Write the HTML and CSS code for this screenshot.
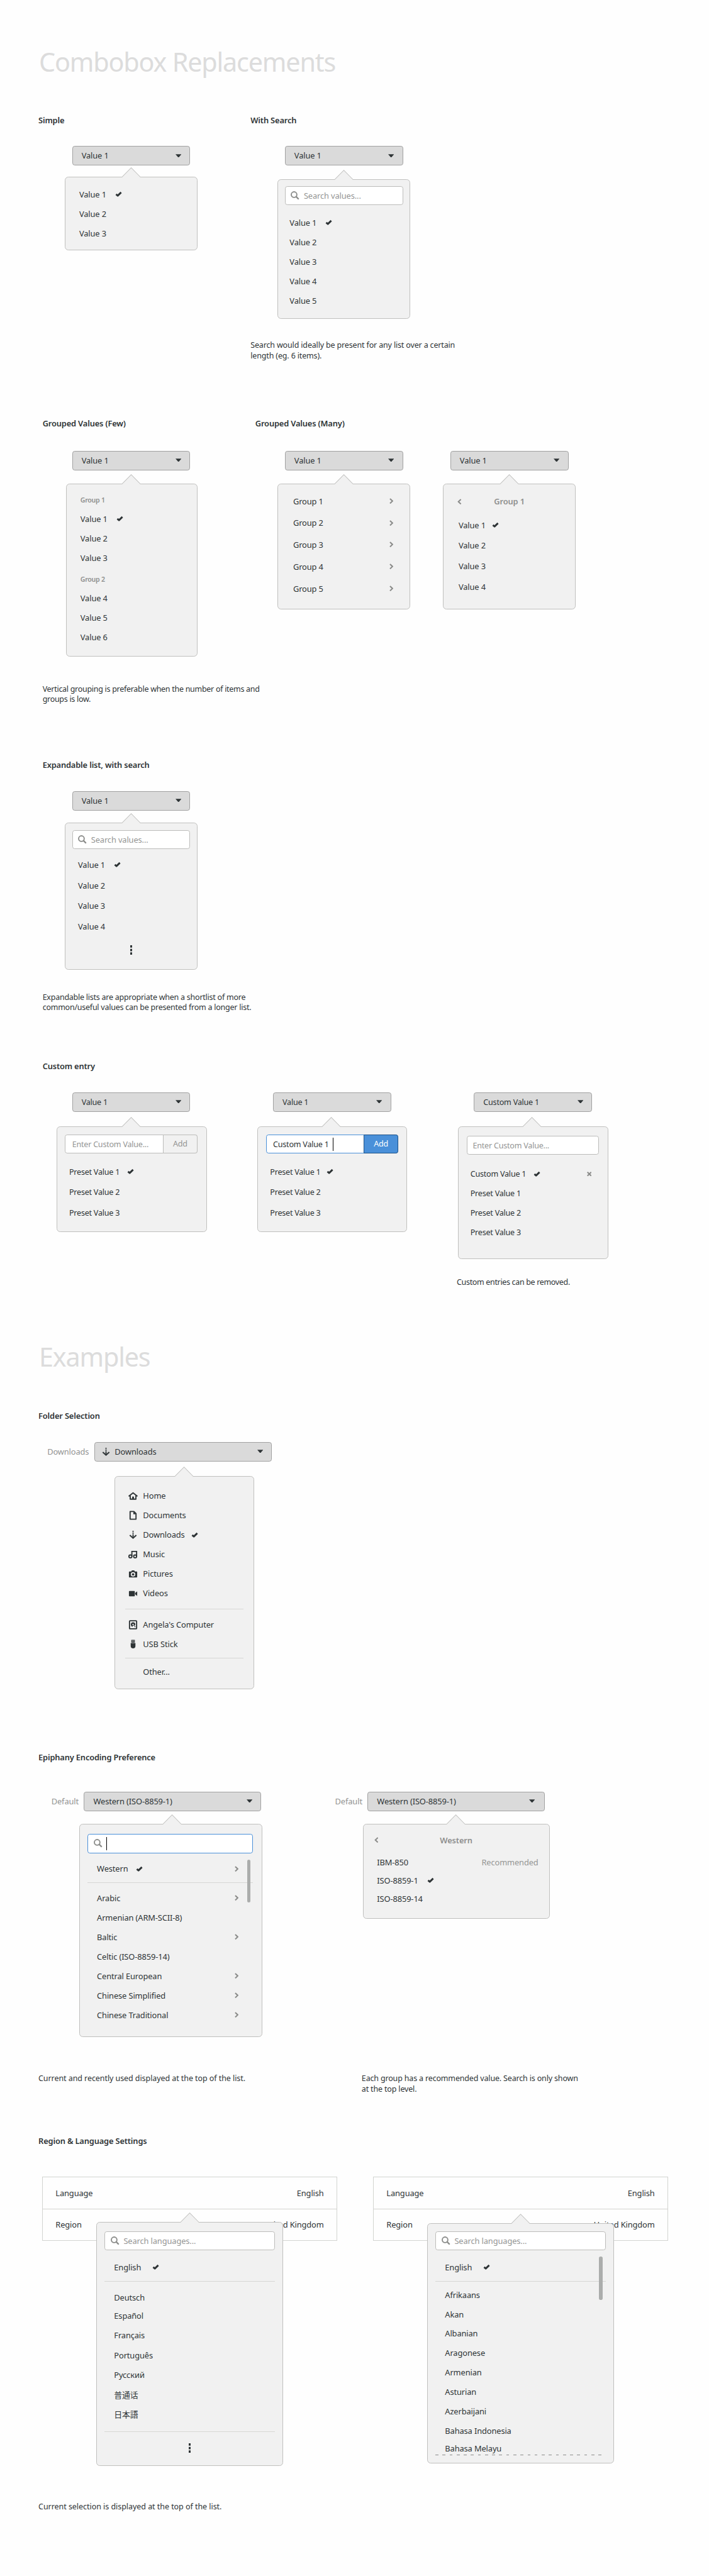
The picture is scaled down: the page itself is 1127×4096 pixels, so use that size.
FILE: index.html
```html
<!DOCTYPE html>
<html lang="en">
<head>
<meta charset="utf-8">
<title>Combobox Replacements</title>
<link rel="stylesheet" href="styles.css">
</head>
<body>
<svg class="defs" aria-hidden="true">
  <symbol id="arrow" viewBox="0 0 31 18"><path d="M0 18V16.5L15.5.8 31 16.5V18z" fill="#f1f1f1"/><path d="M0 16.5L15.5.8 31 16.5" fill="none" stroke="#c2c2c0" stroke-width="1.1"/></symbol>
  <symbol id="caret" viewBox="0 0 10 6"><path d="M0 .3h10L5.7 5.2H4.3z" fill="#2e3436"/></symbol>
  <symbol id="check" viewBox="0 0 12 10"><path d="M1.6 5.2L4.4 7.6 10.200 2" fill="none" stroke="#2e3436" stroke-width="3.100" stroke-linejoin="round"/></symbol>
  <symbol id="next" viewBox="0 0 7 10"><path d="M1 1l4.2 4L1 9" fill="none" stroke="#8b8c8a" stroke-width="2.200"/></symbol>
  <symbol id="back" viewBox="0 0 7 10"><path d="M6 1L1.8 5 6 9" fill="none" stroke="#8b8c8a" stroke-width="2.200"/></symbol>
  <symbol id="close" viewBox="0 0 8 8"><path d="M.8.8l6.4 6.4M7.2.8L.8 7.2" fill="none" stroke="#8b8c8a" stroke-width="2.200"/></symbol>
  <symbol id="search" viewBox="0 0 15 15"><circle cx="5.8" cy="5.8" r="4.7" fill="none" stroke="#8b8c8a" stroke-width="2"/><path d="M9 9l4.6 4.6" stroke="#8b8c8a" stroke-width="2.5"/></symbol>
  <symbol id="dots" viewBox="0 0 4 16"><path d="M0 0h4v4H0zM0 6h4v4H0zM0 12h4v4H0z" fill="#2e3436"/></symbol>
  <symbol id="home" viewBox="0 0 16 16"><path d="M1.200 8.300L8 3l6.800 5.300M3.200 8V13.600H12.800V8" fill="none" stroke="#2e3436" stroke-width="2" stroke-linejoin="round" stroke-linecap="round"/><path d="M6.500 9.200h3V14h-3z" fill="#2e3436"/></symbol>
  <symbol id="document" viewBox="0 0 16 16"><path d="M3 1.500h6.500L13 5V14.500H3z" fill="none" stroke="#2e3436" stroke-width="2" stroke-linejoin="round"/><path d="M8.500 1.500l4.500 4.500H8.500z" fill="#2e3436"/></symbol>
  <symbol id="download" viewBox="0 0 16 16"><path d="M7 1h2v2H7zM7 4h2v2H7zM7 7h2v5H7z" fill="#2e3436"/><path d="M2.500 8.500L8 13.500l5.500-5" fill="none" stroke="#2e3436" stroke-width="2.200"/></symbol>
  <symbol id="music" viewBox="0 0 16 16"><path d="M6 11.500V3h8v8.500" fill="none" stroke="#2e3436" stroke-width="2"/><circle cx="3.500" cy="11.500" r="2.500" fill="none" stroke="#2e3436" stroke-width="2"/><circle cx="11.500" cy="11.500" r="2.500" fill="none" stroke="#2e3436" stroke-width="2"/></symbol>
  <symbol id="camera" viewBox="0 0 16 16"><path fill-rule="evenodd" d="M2 4h3l1-2h4l1 2h3q1 0 1 1v8q0 1-1 1H2q-1 0-1-1V5q0-1 1-1zM8 5a3.800 3.800 0 1 0 0 7.600A3.800 3.800 0 1 0 8 5z" fill="#2e3436"/><circle cx="8" cy="8.800" r="2" fill="#2e3436"/></symbol>
  <symbol id="video" viewBox="0 0 16 16"><rect x="1" y="4" width="10" height="9" rx="1" fill="#2e3436"/><path d="M15 4.500v8L11.500 9.500v-2z" fill="#2e3436"/></symbol>
  <symbol id="disk" viewBox="0 0 16 16"><rect x="2" y="1.200" width="12" height="13.600" rx="1" fill="none" stroke="#2e3436" stroke-width="2"/><path d="M8 3.600A4 4 0 0 0 4.200 7.600 4 4 0 0 0 7.200 11.300L8 9.200 9.800 9.200 11.300 12.400 12.200 11.800 10.600 9 11.900 7.600A4 4 0 0 0 8 3.600z" fill="#2e3436"/><circle cx="8" cy="7.600" r="1.200" fill="#f1f1f1"/></symbol>
  <symbol id="usb" viewBox="0 0 16 16"><path d="M5 .5h6V5H5zM4 5.800h8v5q0 4-4 4t-4-4z" fill="#2e3436"/><path d="M6.200 1.800h1.300v1.400H6.200zM8.600 1.800h1.300v1.400H8.600z" fill="#f1f1f1"/></symbol>
</svg>

<main class="page">
  <h1 class="title">Combobox Replacements</h1>

  <section class="section section-basic">
    <article class="demo simple">
      <h2>Simple</h2>
      <div class="select"><span>Value 1</span><svg class="i-caret"><use href="#caret"/></svg></div>
      <div class="popover"><svg class="i-arrow"><use href="#arrow"/></svg>
        <ul class="list"><li>Value 1<svg class="i-check"><use href="#check"/></svg></li><li>Value 2</li><li>Value 3</li></ul>
      </div>
    </article>
    <article class="demo with-search">
      <h2>With Search</h2>
      <div class="select"><span>Value 1</span><svg class="i-caret"><use href="#caret"/></svg></div>
      <div class="popover"><svg class="i-arrow"><use href="#arrow"/></svg>
        <div class="entry"><svg class="i-search"><use href="#search"/></svg><span class="hint">Search values...</span></div>
        <ul class="list"><li>Value 1<svg class="i-check"><use href="#check"/></svg></li><li>Value 2</li><li>Value 3</li><li>Value 4</li><li>Value 5</li></ul>
      </div>
      <p class="note">Search would ideally be present for any list over a certain<br>length (eg. 6 items).</p>
    </article>
  </section>

  <section class="section section-grouped">
    <article class="demo few">
      <h2>Grouped Values (Few)</h2>
      <div class="select"><span>Value 1</span><svg class="i-caret"><use href="#caret"/></svg></div>
      <div class="popover"><svg class="i-arrow"><use href="#arrow"/></svg>
        <h3 class="group">Group 1</h3>
        <ul class="list"><li>Value 1<svg class="i-check"><use href="#check"/></svg></li><li>Value 2</li><li>Value 3</li></ul>
        <h3 class="group second">Group 2</h3>
        <ul class="list"><li>Value 4</li><li>Value 5</li><li>Value 6</li></ul>
      </div>
      <p class="note">Vertical grouping is preferable when the number of items and<br>groups is low.</p>
    </article>
    <article class="demo many">
      <h2>Grouped Values (Many)</h2>
      <div class="select"><span>Value 1</span><svg class="i-caret"><use href="#caret"/></svg></div>
      <div class="popover"><svg class="i-arrow"><use href="#arrow"/></svg>
        <ul class="list">
          <li>Group 1<svg class="i-next"><use href="#next"/></svg></li>
          <li>Group 2<svg class="i-next"><use href="#next"/></svg></li>
          <li>Group 3<svg class="i-next"><use href="#next"/></svg></li>
          <li>Group 4<svg class="i-next"><use href="#next"/></svg></li>
          <li>Group 5<svg class="i-next"><use href="#next"/></svg></li>
        </ul>
      </div>
    </article>
    <article class="demo untitled many-sub">
      <div class="select"><span>Value 1</span><svg class="i-caret"><use href="#caret"/></svg></div>
      <div class="popover"><svg class="i-arrow"><use href="#arrow"/></svg>
        <header class="crumb"><svg class="i-back"><use href="#back"/></svg><h3>Group 1</h3></header>
        <ul class="list"><li>Value 1<svg class="i-check"><use href="#check"/></svg></li><li>Value 2</li><li>Value 3</li><li>Value 4</li></ul>
      </div>
    </article>
  </section>

  <section class="section section-expand">
    <article class="demo expandable">
      <h2>Expandable list, with search</h2>
      <div class="select"><span>Value 1</span><svg class="i-caret"><use href="#caret"/></svg></div>
      <div class="popover"><svg class="i-arrow"><use href="#arrow"/></svg>
        <div class="entry"><svg class="i-search"><use href="#search"/></svg><span class="hint">Search values...</span></div>
        <ul class="list"><li>Value 1<svg class="i-check"><use href="#check"/></svg></li><li>Value 2</li><li>Value 3</li><li>Value 4</li></ul>
        <svg class="i-dots"><use href="#dots"/></svg>
      </div>
      <p class="note">Expandable lists are appropriate when a shortlist of more<br>common/useful values can be presented from a longer list.</p>
    </article>
  </section>

  <section class="section section-custom">
    <article class="demo custom-empty">
      <h2>Custom entry</h2>
      <div class="select"><span>Value 1</span><svg class="i-caret"><use href="#caret"/></svg></div>
      <div class="popover"><svg class="i-arrow"><use href="#arrow"/></svg>
        <div class="entry joined"><span class="hint">Enter Custom Value...</span><span class="add">Add</span></div>
        <ul class="list"><li>Preset Value 1<svg class="i-check"><use href="#check"/></svg></li><li>Preset Value 2</li><li>Preset Value 3</li></ul>
      </div>
    </article>
    <article class="demo untitled custom-typing">
      <div class="select"><span>Value 1</span><svg class="i-caret"><use href="#caret"/></svg></div>
      <div class="popover"><svg class="i-arrow"><use href="#arrow"/></svg>
        <div class="entry joined focused"><span>Custom Value 1</span><i class="cursor"></i><span class="add">Add</span></div>
        <ul class="list"><li>Preset Value 1<svg class="i-check"><use href="#check"/></svg></li><li>Preset Value 2</li><li>Preset Value 3</li></ul>
      </div>
    </article>
    <article class="demo untitled custom-added">
      <div class="select"><span>Custom Value 1</span><svg class="i-caret"><use href="#caret"/></svg></div>
      <div class="popover"><svg class="i-arrow"><use href="#arrow"/></svg>
        <div class="entry"><span class="hint">Enter Custom Value...</span></div>
        <ul class="list"><li>Custom Value 1<svg class="i-check"><use href="#check"/></svg><svg class="i-close"><use href="#close"/></svg></li><li>Preset Value 1</li><li>Preset Value 2</li><li>Preset Value 3</li></ul>
      </div>
      <p class="note">Custom entries can be removed.</p>
    </article>
  </section>

  <h1 class="title title-examples">Examples</h1>

  <section class="section section-folder">
    <article class="demo folder">
      <h2>Folder Selection</h2>
      <div class="field"><span class="label">Downloads</span>
        <div class="select"><svg class="i-place"><use href="#download"/></svg><span>Downloads</span><svg class="i-caret"><use href="#caret"/></svg></div>
      </div>
      <div class="popover"><svg class="i-arrow"><use href="#arrow"/></svg>
        <ul class="list">
          <li><svg class="i-place"><use href="#home"/></svg>Home</li>
          <li><svg class="i-place"><use href="#document"/></svg>Documents</li>
          <li><svg class="i-place"><use href="#download"/></svg>Downloads<svg class="i-check"><use href="#check"/></svg></li>
          <li><svg class="i-place"><use href="#music"/></svg>Music</li>
          <li><svg class="i-place"><use href="#camera"/></svg>Pictures</li>
          <li><svg class="i-place"><use href="#video"/></svg>Videos</li>
        </ul>
        <hr>
        <ul class="list">
          <li><svg class="i-place"><use href="#disk"/></svg>Angela's Computer</li>
          <li><svg class="i-place"><use href="#usb"/></svg>USB Stick</li>
        </ul>
        <hr class="tight">
        <ul class="list"><li class="indented">Other...</li></ul>
      </div>
    </article>
  </section>

  <section class="section section-encoding">
    <article class="demo encoding">
      <h2>Epiphany Encoding Preference</h2>
      <div class="field"><span class="label">Default</span>
        <div class="select"><span>Western (ISO-8859-1)</span><svg class="i-caret"><use href="#caret"/></svg></div>
      </div>
      <div class="popover"><svg class="i-arrow"><use href="#arrow"/></svg>
        <div class="entry focused"><svg class="i-search"><use href="#search"/></svg><i class="cursor"></i></div>
        <ul class="list current"><li>Western<svg class="i-check"><use href="#check"/></svg><svg class="i-next"><use href="#next"/></svg></li></ul>
        <hr>
        <ul class="list">
          <li>Arabic<svg class="i-next"><use href="#next"/></svg></li>
          <li>Armenian (ARM-SCII-8)</li>
          <li>Baltic<svg class="i-next"><use href="#next"/></svg></li>
          <li>Celtic (ISO-8859-14)</li>
          <li>Central European<svg class="i-next"><use href="#next"/></svg></li>
          <li>Chinese Simplified<svg class="i-next"><use href="#next"/></svg></li>
          <li>Chinese Traditional<svg class="i-next"><use href="#next"/></svg></li>
        </ul>
        <i class="scrollbar"></i>
      </div>
      <p class="note">Current and recently used displayed at the top of the list.</p>
    </article>
    <article class="demo untitled encoding-sub">
      <div class="field"><span class="label">Default</span>
        <div class="select"><span>Western (ISO-8859-1)</span><svg class="i-caret"><use href="#caret"/></svg></div>
      </div>
      <div class="popover"><svg class="i-arrow"><use href="#arrow"/></svg>
        <header class="crumb"><svg class="i-back"><use href="#back"/></svg><h3>Western</h3></header>
        <ul class="list"><li>IBM-850<span class="hint push">Recommended</span></li><li>ISO-8859-1<svg class="i-check"><use href="#check"/></svg></li><li>ISO-8859-14</li></ul>
      </div>
      <p class="note">Each group has a recommended value. Search is only shown<br>at the top level.</p>
    </article>
  </section>

  <section class="section section-region">
    <article class="demo region short">
      <h2>Region &amp; Language Settings</h2>
      <dl class="settings"><div><dt>Language</dt><dd>English</dd></div><div><dt>Region</dt><dd>United Kingdom</dd></div></dl>
      <div class="popover"><svg class="i-arrow"><use href="#arrow"/></svg>
        <div class="entry"><svg class="i-search"><use href="#search"/></svg><span class="hint">Search languages...</span></div>
        <ul class="list current"><li>English<svg class="i-check"><use href="#check"/></svg></li></ul>
        <hr>
        <ul class="list languages"><li>Deutsch</li><li>Español</li><li>Français</li><li>Português</li><li>Русский</li><li lang="zh">普通话</li><li lang="ja">日本語</li></ul>
        <hr class="end">
        <svg class="i-dots"><use href="#dots"/></svg>
      </div>
      <p class="note">Current selection is displayed at the top of the list.</p>
    </article>
    <article class="demo untitled region long">
      <dl class="settings"><div><dt>Language</dt><dd>English</dd></div><div><dt>Region</dt><dd>United Kingdom</dd></div></dl>
      <div class="popover"><svg class="i-arrow"><use href="#arrow"/></svg>
        <div class="entry"><svg class="i-search"><use href="#search"/></svg><span class="hint">Search languages...</span></div>
        <ul class="list current"><li>English<svg class="i-check"><use href="#check"/></svg></li></ul>
        <hr>
        <ul class="list languages"><li>Afrikaans</li><li>Akan</li><li>Albanian</li><li>Aragonese</li><li>Armenian</li><li>Asturian</li><li>Azerbaijani</li><li>Bahasa Indonesia</li><li>Bahasa Melayu</li></ul>
        <div class="cutoff"></div>
        <i class="scrollbar"></i>
      </div>
    </article>
  </section>
</main>
</body>
</html>
```
FILE: styles.css
```css
* { box-sizing: border-box; }

html, body { margin: 0; background: #fefefe; overflow: hidden; }

body {
  font-family: "Noto Sans", "Noto Sans CJK SC", sans-serif;
  font-size: 13.7px;
  letter-spacing: -0.13px;
  color: #2e3436;
}

svg { display: block; flex: none; }
.defs { position: absolute; width: 0; height: 0; }

/* The sheet is laid out on a 1200px wide canvas and scaled down as a whole. */
.page { zoom: 0.9393; width: 1200px; height: 4361px; padding-top: 75px; }

.title {
  margin: 0 0 59px;
  padding-left: 66px;
  font-size: 44px;
  line-height: 60px;
  font-weight: 400;
  letter-spacing: -1.25px;
  color: #dcdcdc;
}
.title-examples { margin-bottom: 60px; }

h2 { margin: 0; font-size: 13.7px; line-height: 20px; font-weight: 600; letter-spacing: -0.17px; white-space: nowrap; }
h3 { margin: 0; font-size: 13.7px; font-weight: 600; color: #8e8f8e; }
ul, dl, dd { margin: 0; padding: 0; list-style: none; }

/* Sections */
.section { display: flex; align-items: flex-start; --lead: 34px; }
.section-basic { height: 513px; padding-left: 65px; --lead: 33px; }
.section-grouped { height: 578px; padding-left: 72px; --lead: 36px; --drop: 23px; }
.section-expand { height: 510px; padding-left: 72px; }
.section-custom { height: 472px; padding-left: 72px; --drop: 25px; }
.section-folder { height: 578px; padding-left: 65px; }
.section-encoding { height: 650px; padding-left: 65px; --lead: 48px; --drop: 21px; }
.section-region { height: 746px; padding-left: 65px; --lead: 50px; }

.demo { flex: none; display: flex; flex-direction: column; align-items: flex-start; }
.untitled { padding-top: 20px; }

/* Combo button */
.select {
  display: flex;
  align-items: center;
  width: 200px;
  height: 33px;
  margin: var(--lead) 0 0 var(--select-x);
  padding: 0 14px 0 15px;
  border: 1px solid #a1a1a1;
  border-radius: 4px;
  background: #dadada;
}
.i-caret { width: 10px; height: 6px; margin-left: auto; }
.field { display: flex; align-items: center; margin: var(--lead) 0 0 var(--select-x); }
.field .select { width: 300px; margin: 0; }
.label { color: #929392; }

/* Popover */
.popover {
  position: relative;
  display: flex;
  flex-direction: column;
  width: var(--pop-w);
  height: var(--pop-h);
  margin: var(--drop) 0 0 var(--pop-x);
  border: 1px solid #c0c0be;
  border-radius: 6px;
  background: #f1f1f1;
}
.i-arrow { position: absolute; top: -17px; left: var(--arrow-x); width: 31px; height: 18px; }

.entry {
  flex: none;
  display: flex;
  align-items: center;
  height: 32px;
  padding: 0 9px;
  border: 1px solid #bcbcba;
  border-radius: 4px;
  background: #fff;
}
.i-search { width: 15px; height: 15px; margin-right: 7px; }
.hint { color: #949594; }
.push { margin-left: auto; }
.focused { border-color: #4a90d9; }
.cursor { width: 1px; height: 22px; background: #000; }
.joined { padding: 0 0 0 11px; }
.add {
  width: 58px;
  height: 32px;
  margin: -1px -1px -1px auto;
  border: 1px solid #bcbcba;
  border-radius: 0 4px 4px 0;
  background: #f1f1f1;
  color: #949594;
  line-height: 30px;
  text-align: center;
}
.focused .add { border-color: #1c5187; background: #4a90d9; color: #fff; }

.list { --row: 33px; }
.list li { display: flex; align-items: center; height: var(--row); white-space: nowrap; }
.i-check { width: 12px; height: 10px; margin-left: var(--check-gap, 15px); }
.i-next { width: 7px; height: 10px; margin-left: auto; }
.i-close { width: 8px; height: 8px; margin-left: auto; }
.i-dots { width: 4px; height: 16px; align-self: center; }
.i-place { width: 16px; height: 16px; margin-right: 9px; }

.crumb { position: relative; display: flex; align-items: center; justify-content: center; height: 34px; }
.i-back { position: absolute; left: var(--back-x); width: 7px; height: 10px; }

hr { flex: none; width: auto; height: 1px; margin: 0; border: 0; background: #d7d7d5; }
.scrollbar { position: absolute; width: 6px; border-radius: 3px; background: #abadac; }

.note { margin: 0; font-size: 13.3px; line-height: 17.3px; white-space: nowrap; }

/* Simple */
.simple { width: 359px; --select-x: 57px; --pop-x: 45px; --pop-w: 224px; --pop-h: 125px; --drop: 19px; --arrow-x: 95px; }
.simple .list { padding: 12px 0 0 23px; }

/* With search */
.with-search { --select-x: 58px; --pop-x: 46px; --pop-w: 224px; --pop-h: 237px; --drop: 23px; --arrow-x: 95px; }
.with-search .entry { margin: 11px 11px 0; }
.with-search .list { padding: 13px 0 0 19px; }
.with-search .note { margin-top: 36.5px; letter-spacing: -0.16px; }

/* Grouped, few */
.few { width: 360px; --select-x: 50px; --pop-x: 40px; --pop-w: 222px; --pop-h: 292px; --arrow-x: 93px; }
.few .popover { padding: 13px 0 0 23px; }
.group { height: 29px; font-size: 11.3px; line-height: 29px; letter-spacing: -0.3px; }
.second { margin-top: 6px; }
.few .note { margin-top: 47.3px; letter-spacing: -0.3px; }

/* Grouped, many */
.many { width: 318px; --select-x: 50px; --pop-x: 38px; --pop-w: 224px; --pop-h: 213px; --arrow-x: 95px; }
.many .list { --row: 37px; padding: 9.5px 27px 0 25px; }
.many-sub { --select-x: 12px; --pop-x: 0px; --pop-w: 224px; --pop-h: 213px; --arrow-x: 95px; --back-x: 23px; --check-gap: 11px; }
.many-sub .popover { padding-top: 12px; }
.many-sub .list { --row: 35px; padding: 5px 0 0 25px; }

/* Expandable */
.expandable { --select-x: 50px; --pop-x: 38px; --pop-w: 224px; --pop-h: 249px; --drop: 21px; --arrow-x: 95px; }
.expandable .entry { margin: 11px 11px 0; }
.expandable .list { --row: 35px; padding: 9px 0 14px 21px; }
.expandable .note { margin-top: 38.3px; letter-spacing: -0.25px; }

/* Custom entry */
.section-custom .demo { font-size: 13.4px; letter-spacing: -0.25px; }
.custom-empty { width: 363px; --select-x: 50px; --pop-x: 24px; --pop-w: 254px; --pop-h: 179px; --arrow-x: 109px; --check-gap: 13px; }
.custom-empty .entry { margin: 13px 15px 0 13px; }
.custom-empty .list { --row: 35px; padding: 13px 0 0 20px; }
.custom-typing { width: 338px; --select-x: 27px; --pop-x: 0px; --pop-w: 254px; --pop-h: 179px; --arrow-x: 109px; --check-gap: 10px; }
.custom-typing .entry { margin: 13px 14px 0; }
.custom-typing .cursor { margin-left: 7px; }
.custom-typing .list { --row: 35px; padding: 13px 0 0 21px; }
.custom-added { --select-x: 29px; --pop-x: 2px; --pop-w: 254px; --pop-h: 225px; --arrow-x: 109px; --check-gap: 13px; }
.custom-added .entry { margin: 15px 14px 0; }
.custom-added .list { padding: 16px 27px 0 20px; }
.custom-added .note { margin-top: 30.3px; letter-spacing: -0.35px; }

/* Folder selection */
.folder { --select-x: 15px; --pop-x: 129px; --pop-w: 236px; --pop-h: 361px; --drop: 25px; --arrow-x: 101px; --check-gap: 11px; }
.folder .label { width: 80px; }
.folder .select { padding-left: 10px; }
.folder .select .i-place { margin-right: 7px; }
.folder .popover { padding-top: 15.5px; }
.folder .list { padding-left: 22px; }
.folder hr { margin: 9.5px 17px 10px; }
.folder hr.tight { margin: 7px 17px 5.5px; }
.indented { padding-left: 25px; }

/* Encoding */
.encoding { width: 547px; --select-x: 22px; --pop-x: 69px; --pop-w: 310px; --pop-h: 361px; --arrow-x: 141px; --check-gap: 13px; }
.encoding .label, .encoding-sub .label { width: 55px; }
.encoding .entry { margin: 17px 15px 0 13px; }
.encoding .scrollbar { top: 60px; right: 19px; height: 73px; }
.encoding .list { padding: 0 39px 0 29px; }
.encoding .current { margin-top: 10px; }
.encoding hr { margin: 7px 15px 8.5px 13px; }
.encoding .note { margin-top: 62px; letter-spacing: -0.07px; }
.encoding-sub { --select-x: -45px; --pop-x: 2px; --pop-w: 316px; --pop-h: 161px; --arrow-x: 141px; --back-x: 18px; }
.encoding-sub .i-caret { margin-right: 2px; }
.encoding-sub .popover { padding-top: 10px; }
.encoding-sub .list { --row: 31px; padding: 5px 18px 0 23px; }
.encoding-sub .note { margin-top: 262.5px; letter-spacing: -0.17px; }

/* Region and language */
.region { width: 560px; --pop-x: 98px; --pop-w: 316px; --arrow-x: 141.5px; --check-gap: 19px; }
.settings { width: 500px; margin: var(--lead) 0 0 6px; border: 1px solid #d3d4d0; }
.settings div { display: flex; align-items: center; justify-content: space-between; height: 52.5px; padding: 0 22px; }
.settings div + div { height: 53.5px; border-top: 1px solid #d3d4d0; }
.region .entry { margin: 0 13px; }
.region .current { margin-top: 12px; }
.region .list { padding-left: 29px; }
.region hr { margin: 7px 13px 10.6px; }
.short { --pop-h: 413px; --drop: -32px; }
.short .popover { padding-top: 15px; }
.short .languages { --row: 33.4px; }
.short .languages li:first-child { margin-bottom: -3px; }
.short hr.end { margin: 12.5px 13px 19px; }
.short .note { margin-top: 60.7px; letter-spacing: -0.04px; }
.long { --pop-h: 407px; --drop: -30px; }
.long .popover { padding-top: 13px; }
.long hr { margin-bottom: 6px; }
.long .languages { --row: 32.9px; }
.long .languages li:last-child { margin-top: -3px; }
.long .scrollbar { top: 56px; right: 18px; height: 73px; }
.cutoff {
  flex: none;
  height: 1px;
  margin: -6px 20px 0 13px;
  background: repeating-linear-gradient(90deg, #8b8c8a 0 5px, transparent 5px 12px);
}
```
